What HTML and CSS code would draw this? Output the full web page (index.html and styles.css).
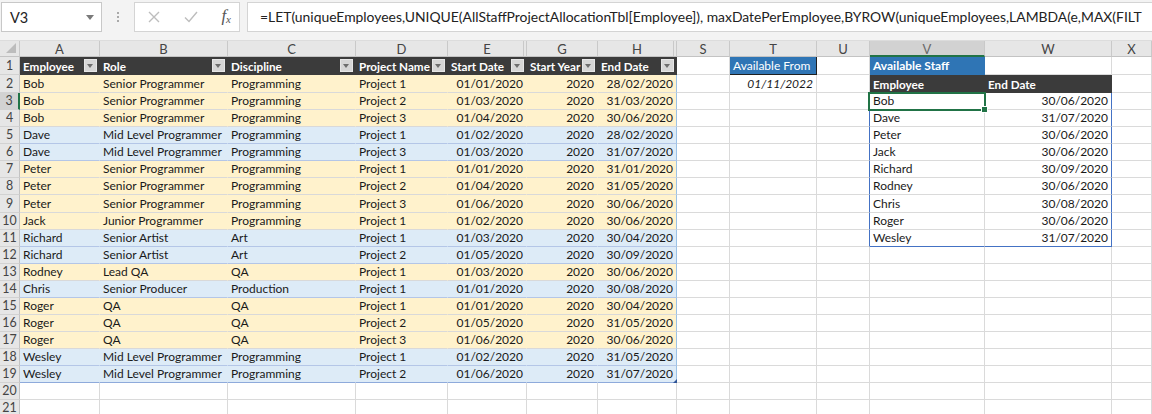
FILE: index.html
```html
<!DOCTYPE html>
<html>
<head>
<meta charset="utf-8">
<link rel="stylesheet" href="styles.css">
</head>
<body>
<div class="toolbar">
  <div class="namebox"><span>V3</span><span class="nb-arrow"></span></div>
  <div class="dots"><i></i><i></i><i></i></div>
  <div class="fbtns">
    <svg class="ico" width="12" height="12" viewBox="0 0 12 12"><path d="M1 1L11 11M11 1L1 11" stroke="#bdbdbd" stroke-width="1.4" fill="none"/></svg>
    <svg class="ico" width="14" height="12" viewBox="0 0 14 12"><path d="M1 6.5L5 10.5L13 1" stroke="#bdbdbd" stroke-width="1.4" fill="none"/></svg>
    <span class="fx">f<sub>x</sub></span>
  </div>
  <div class="formula">=LET(uniqueEmployees,UNIQUE(AllStaffProjectAllocationTbl[Employee]), maxDatePerEmployee,BYROW(uniqueEmployees,LAMBDA(e,MAX(FILT</div>
</div>

<div class="sheet">
  <div class="row colhdr">
    <div class="corner"><span class="tri"></span></div>
    <div>A</div><div>B</div><div>C</div><div>D</div><div class="hid">E</div><div>G</div><div class="hid">H</div><div>S</div><div>T</div><div>U</div><div class="selcol">V</div><div>W</div><div>X</div>
  </div>

  <div class="row h18">
    <div class="rh">1</div>
    <div class="th">Employee<span class="dd"></span></div>
    <div class="th">Role<span class="dd"></span></div>
    <div class="th">Discipline<span class="dd"></span></div>
    <div class="th">Project Name<span class="dd"></span></div>
    <div class="th">Start Date<span class="dd"></span></div>
    <div class="th">Start Year<span class="dd"></span></div>
    <div class="th">End Date<span class="dd"></span></div>
    <div></div>
    <div class="avail">Available From</div>
    <div></div>
    <div class="staff">Available Staff</div>
    <div></div>
    <div></div>
  </div>

  <div class="row h18">
    <div class="rh">2</div>
    <div class="y">Bob</div><div class="y">Senior Programmer</div><div class="y">Programming</div><div class="y">Project 1</div><div class="y n">01/01/2020</div><div class="y n">2020</div><div class="y n tr">28/02/2020</div>
    <div></div><div class="n it">01/11/2022</div><div></div>
    <div class="dh">Employee</div><div class="dh">End Date</div><div></div>
  </div>

  <div class="row">
    <div class="rh selrow">3</div>
    <div class="y">Bob</div><div class="y">Senior Programmer</div><div class="y">Programming</div><div class="y">Project 2</div><div class="y n">01/03/2020</div><div class="y n">2020</div><div class="y n tr">31/03/2020</div>
    <div></div><div></div><div class="ub"></div>
    <div>Bob</div><div class="n wb">30/06/2020</div><div></div>
  </div>

  <div class="row">
    <div class="rh">4</div>
    <div class="y">Bob</div><div class="y">Senior Programmer</div><div class="y">Programming</div><div class="y">Project 3</div><div class="y n">01/04/2020</div><div class="y n">2020</div><div class="y n tr">30/06/2020</div>
    <div></div><div></div><div class="ub"></div>
    <div>Dave</div><div class="n wb">31/07/2020</div><div></div>
  </div>

  <div class="row">
    <div class="rh">5</div>
    <div class="b">Dave</div><div class="b">Mid Level Programmer</div><div class="b">Programming</div><div class="b">Project 1</div><div class="b n">01/02/2020</div><div class="b n">2020</div><div class="b n tr">28/02/2020</div>
    <div></div><div></div><div class="ub"></div>
    <div>Peter</div><div class="n wb">30/06/2020</div><div></div>
  </div>

  <div class="row">
    <div class="rh">6</div>
    <div class="b">Dave</div><div class="b">Mid Level Programmer</div><div class="b">Programming</div><div class="b">Project 3</div><div class="b n">01/03/2020</div><div class="b n">2020</div><div class="b n tr">31/07/2020</div>
    <div></div><div></div><div class="ub"></div>
    <div>Jack</div><div class="n wb">30/06/2020</div><div></div>
  </div>

  <div class="row">
    <div class="rh">7</div>
    <div class="y">Peter</div><div class="y">Senior Programmer</div><div class="y">Programming</div><div class="y">Project 1</div><div class="y n">01/01/2020</div><div class="y n">2020</div><div class="y n tr">31/01/2020</div>
    <div></div><div></div><div class="ub"></div>
    <div>Richard</div><div class="n wb">30/09/2020</div><div></div>
  </div>

  <div class="row">
    <div class="rh">8</div>
    <div class="y">Peter</div><div class="y">Senior Programmer</div><div class="y">Programming</div><div class="y">Project 2</div><div class="y n">01/04/2020</div><div class="y n">2020</div><div class="y n tr">31/05/2020</div>
    <div></div><div></div><div class="ub"></div>
    <div>Rodney</div><div class="n wb">30/06/2020</div><div></div>
  </div>

  <div class="row h18">
    <div class="rh">9</div>
    <div class="y">Peter</div><div class="y">Senior Programmer</div><div class="y">Programming</div><div class="y">Project 3</div><div class="y n">01/06/2020</div><div class="y n">2020</div><div class="y n tr">30/06/2020</div>
    <div></div><div></div><div class="ub"></div>
    <div>Chris</div><div class="n wb">30/08/2020</div><div></div>
  </div>

  <div class="row">
    <div class="rh">10</div>
    <div class="y">Jack</div><div class="y">Junior Programmer</div><div class="y">Programming</div><div class="y">Project 1</div><div class="y n">01/02/2020</div><div class="y n">2020</div><div class="y n tr">30/06/2020</div>
    <div></div><div></div><div class="ub"></div>
    <div>Roger</div><div class="n wb">30/06/2020</div><div></div>
  </div>

  <div class="row">
    <div class="rh">11</div>
    <div class="b">Richard</div><div class="b">Senior Artist</div><div class="b">Art</div><div class="b">Project 1</div><div class="b n">01/03/2020</div><div class="b n">2020</div><div class="b n tr">30/04/2020</div>
    <div></div><div></div><div class="ub"></div>
    <div class="bb">Wesley</div><div class="n wb bb">31/07/2020</div><div></div>
  </div>

  <div class="row">
    <div class="rh">12</div>
    <div class="b">Richard</div><div class="b">Senior Artist</div><div class="b">Art</div><div class="b">Project 2</div><div class="b n">01/05/2020</div><div class="b n">2020</div><div class="b n tr">30/09/2020</div>
    <div></div><div></div><div></div><div></div><div></div><div></div>
  </div>

  <div class="row">
    <div class="rh">13</div>
    <div class="y">Rodney</div><div class="y">Lead QA</div><div class="y">QA</div><div class="y">Project 1</div><div class="y n">01/03/2020</div><div class="y n">2020</div><div class="y n tr">30/06/2020</div>
    <div></div><div></div><div></div><div></div><div></div><div></div>
  </div>

  <div class="row">
    <div class="rh">14</div>
    <div class="b">Chris</div><div class="b">Senior Producer</div><div class="b">Production</div><div class="b">Project 1</div><div class="b n">01/01/2020</div><div class="b n">2020</div><div class="b n tr">30/08/2020</div>
    <div></div><div></div><div></div><div></div><div></div><div></div>
  </div>

  <div class="row">
    <div class="rh">15</div>
    <div class="y">Roger</div><div class="y">QA</div><div class="y">QA</div><div class="y">Project 1</div><div class="y n">01/01/2020</div><div class="y n">2020</div><div class="y n tr">30/04/2020</div>
    <div></div><div></div><div></div><div></div><div></div><div></div>
  </div>

  <div class="row">
    <div class="rh">16</div>
    <div class="y">Roger</div><div class="y">QA</div><div class="y">QA</div><div class="y">Project 2</div><div class="y n">01/05/2020</div><div class="y n">2020</div><div class="y n tr">31/05/2020</div>
    <div></div><div></div><div></div><div></div><div></div><div></div>
  </div>

  <div class="row">
    <div class="rh">17</div>
    <div class="y">Roger</div><div class="y">QA</div><div class="y">QA</div><div class="y">Project 3</div><div class="y n">01/06/2020</div><div class="y n">2020</div><div class="y n tr">30/06/2020</div>
    <div></div><div></div><div></div><div></div><div></div><div></div>
  </div>

  <div class="row">
    <div class="rh">18</div>
    <div class="b">Wesley</div><div class="b">Mid Level Programmer</div><div class="b">Programming</div><div class="b">Project 1</div><div class="b n">01/02/2020</div><div class="b n">2020</div><div class="b n tr">31/05/2020</div>
    <div></div><div></div><div></div><div></div><div></div><div></div>
  </div>

  <div class="row">
    <div class="rh">19</div>
    <div class="b last">Wesley</div><div class="b last">Mid Level Programmer</div><div class="b last">Programming</div><div class="b last">Project 2</div><div class="b n last">01/06/2020</div><div class="b n last">2020</div><div class="b n tr last">31/07/2020<span class="resize"></span></div>
    <div></div><div></div><div></div><div></div><div></div><div></div>
  </div>

  <div class="row">
    <div class="rh">20</div>
    <div></div><div></div><div></div><div></div><div></div><div></div><div></div><div></div><div></div><div></div><div></div><div></div><div></div>
  </div>

  <div class="row">
    <div class="rh">21</div>
    <div></div><div></div><div></div><div></div><div></div><div></div><div></div><div></div><div></div><div></div><div></div><div></div><div></div>
  </div>

  <div class="selbox"><span class="handle"></span></div>
</div>
</body>
</html>
```

FILE: styles.css
```css
html, body {
  margin: 0;
  padding: 0;
  width: 1152px;
  height: 414px;
  overflow: hidden;
  background: #ffffff;
  font-family: "Lato", "Open Sans", sans-serif;
}

/* ---------- formula bar ---------- */
.toolbar {
  height: 41px;
  background: #f3f3f3;
  display: flex;
  align-items: flex-start;
  padding-top: 2px;
  box-sizing: border-box;
  border-bottom: 1px solid #dcdcdc;
}
.namebox {
  width: 101px;
  height: 30px;
  margin-left: 1px;
  box-sizing: border-box;
  background: #fff;
  border: 1px solid #c8c8c8;
  display: flex;
  align-items: center;
  justify-content: space-between;
  padding: 0 7px 0 8px;
  font-size: 14.5px;
  color: #222;
}
.nb-arrow {
  width: 0;
  height: 0;
  border-left: 4px solid transparent;
  border-right: 4px solid transparent;
  border-top: 5px solid #7a7a7a;
}
.dots {
  width: 32px;
  height: 30px;
  display: flex;
  flex-direction: column;
  align-items: center;
  justify-content: center;
  gap: 2px;
}
.dots i {
  display: block;
  width: 2px;
  height: 2px;
  background: #a9a9a9;
}
.fbtns {
  width: 106px;
  height: 30px;
  box-sizing: border-box;
  background: #fff;
  border: 1px solid #d4d4d4;
  display: flex;
  align-items: center;
  justify-content: space-between;
  padding: 0 8px 0 13px;
}
.fx {
  font-family: "Liberation Serif", serif;
  font-style: italic;
  font-size: 17px;
  color: #555;
  margin-top: -3px;
}
.fx sub {
  font-size: 11px;
  vertical-align: -2px;
}
.formula {
  flex: 1;
  margin-left: 7px;
  height: 30px;
  box-sizing: border-box;
  background: #fff;
  border: 1px solid #d4d4d4;
  border-right: none;
  padding-left: 12px;
  font-size: 13.9px;
  line-height: 28px;
  color: #222;
  white-space: nowrap;
  overflow: hidden;
}

/* ---------- sheet grid ---------- */
.sheet {
  position: relative;
}
.row {
  display: grid;
  grid-template-columns: 20px 80px 128px 128px 92px 79px 71px 79px 53px 87px 53px 115px 127px 1fr;
  height: 17px;
}
.row.h18 {
  height: 18px;
}
.row > div {
  border-right: 1px solid #dadada;
  border-bottom: 1px solid #dadada;
  padding: 0 3px;
  font-size: 12px;
  line-height: 16px;
  color: #1a1a1a;
  white-space: nowrap;
  overflow: hidden;
  min-width: 0;
  display: flex;
  align-items: center;
}
.row > div.n {
  justify-content: flex-end;
}
.row > div.it {
  font-style: italic;
}

/* column header */
.row.colhdr {
  height: 16px;
}
.colhdr > div {
  background: #e6e6e6;
  border-right-color: #c9c9c9;
  border-bottom-color: #c3c3c3;
  justify-content: center;
  color: #444;
  font-size: 13px;
  padding: 0;
}
.colhdr > div.hid {
  box-shadow: inset -2px 0 0 #e6e6e6, inset -3px 0 0 #c9c9c9;
}
.colhdr > .corner {
  position: relative;
}
.tri {
  position: absolute;
  right: 3px;
  bottom: 3px;
  width: 0;
  height: 0;
  border-left: 10px solid transparent;
  border-bottom: 10px solid #bcbcbc;
}
.colhdr > div.selcol {
  background: #d2d2d2;
  color: #6a6a6a;
  border-bottom: 2px solid #217346;
  padding-top: 2px;
}

/* row headers */
.row > div.rh {
  background: #e6e6e6;
  border-right-color: #c3c3c3;
  border-bottom-color: #d2d2d2;
  justify-content: center;
  color: #444;
  padding: 0;
  font-size: 12.4px;
}
.row > div.rh.selrow {
  background: #d2d2d2;
  color: #444;
  border-right: 2px solid #217346;
}

/* table header */
.row > div.th {
  background: #3b3b3b;
  border-right-color: #3b3b3b;
  border-bottom-color: #3b3b3b;
  color: #fff;
  font-weight: 700;
  font-size: 11.7px;
  justify-content: space-between;
  padding-right: 2px;
}
.dd {
  width: 13px;
  height: 13px;
  box-sizing: border-box;
  background: #d6d6d6;
  border: 1px solid #e6e6e6;
  position: relative;
  flex: none;
}
.dd::after {
  content: "";
  position: absolute;
  left: 2px;
  top: 4px;
  border-left: 3.5px solid transparent;
  border-right: 3.5px solid transparent;
  border-top: 4px solid #6d6d6d;
}

/* table body */
.row > div.y {
  background: #fff2cc;
  border-right-color: #fff2cc;
  border-bottom-color: #d9d9d9;
}
.row > div.b {
  background: #ddebf7;
  border-right-color: #ddebf7;
  border-bottom-color: #b4c6e7;
}
.row > div.tr {
  border-right-color: #9bc2e6;
  position: relative;
  overflow: visible;
}
.row > div.last {
  border-bottom-color: #8eaadb;
}
.resize {
  position: absolute;
  right: -1px;
  bottom: -1px;
  width: 0;
  height: 0;
  border-left: 4px solid transparent;
  border-bottom: 4px solid #2f5597;
}

/* right side */
.row > div.avail {
  background: #2f75b5;
  color: #fff;
  border-right-color: #1f1f1f;
  border-bottom-color: #1f1f1f;
}
.row > div.staff {
  background: #2f75b5;
  color: #fff;
  font-weight: 700;
  border-right-color: #2f75b5;
  border-bottom-color: #2f75b5;
}
.row > div.dh {
  background: #3b3b3b;
  color: #fff;
  font-weight: 700;
  font-size: 11.7px;
  border-right-color: #3b3b3b;
  border-bottom-color: #3b3b3b;
}
.row > div.ub {
  border-right-color: #4472c4;
}
.row > div.wb {
  border-right-color: #4472c4;
}
.row > div.bb {
  border-bottom-color: #4472c4;
}

/* selection */
.selbox {
  position: absolute;
  left: 868px;
  top: 51px;
  width: 118px;
  height: 19px;
  box-sizing: border-box;
  border: 2px solid #217346;
}
.handle {
  position: absolute;
  right: -4px;
  bottom: -4px;
  width: 5px;
  height: 5px;
  background: #217346;
  border: 1px solid #fff;
}
```
